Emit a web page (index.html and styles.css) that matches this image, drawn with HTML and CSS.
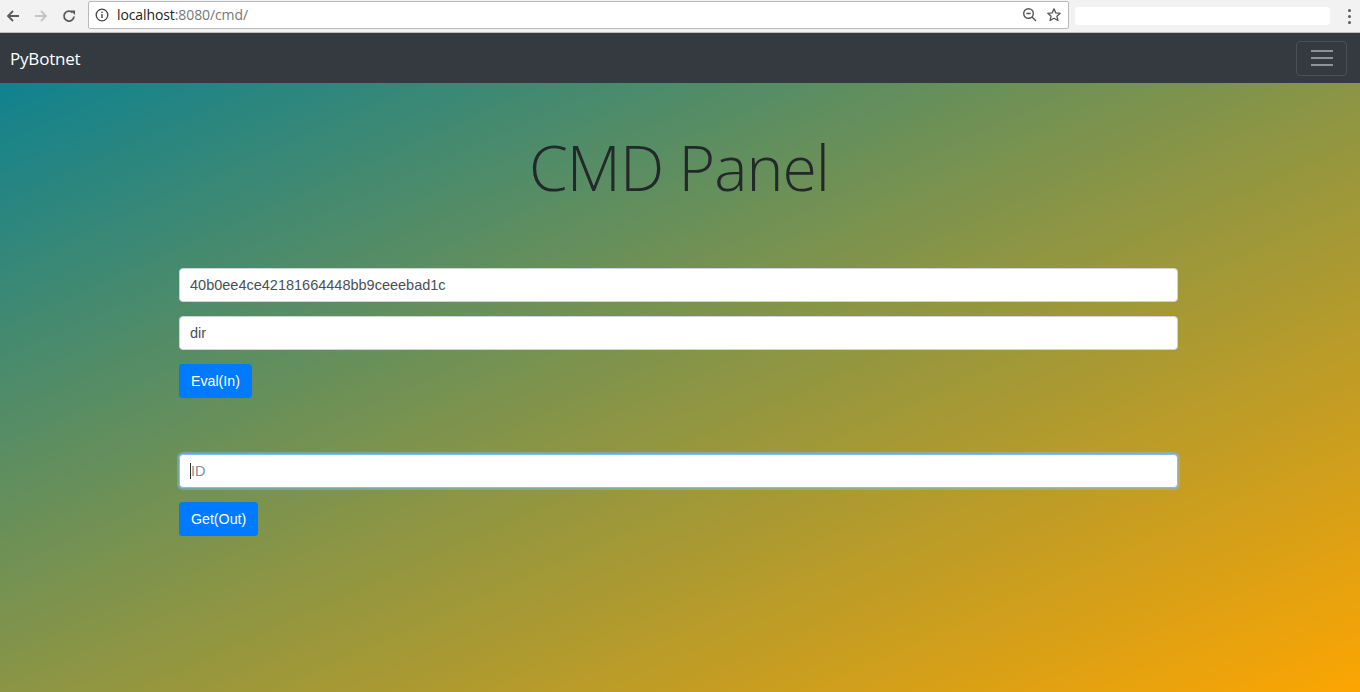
FILE: index.html
```html
<!DOCTYPE html>
<html>
<head>
<meta charset="utf-8">
<title>PyBotnet</title>
<link rel="stylesheet" href="styles.css">
</head>
<body>
<div class="chrome">
  <div class="nav-btns">
    <svg class="cicon" width="16" height="16" viewBox="0 0 16 16"><path d="M14 8H3M8 3L3 8l5 5" fill="none" stroke="#5a5a5a" stroke-width="1.8"/></svg>
    <svg class="cicon" width="16" height="16" viewBox="0 0 16 16"><path d="M2 8h11M8 3l5 5-5 5" fill="none" stroke="#c4c4c4" stroke-width="1.8"/></svg>
    <svg class="cicon" width="16" height="16" viewBox="0 0 16 16"><path d="M13 8.5A5 5 0 1 1 11.5 4.5" fill="none" stroke="#5a5a5a" stroke-width="1.8"/><path d="M9.5 2.5h4.5v4.5z" fill="#5a5a5a"/></svg>
  </div>
  <div class="omnibox">
    <svg class="info" width="14" height="14" viewBox="0 0 14 14"><circle cx="7" cy="7" r="5.8" fill="none" stroke="#444" stroke-width="1.3"/><rect x="6.3" y="6" width="1.4" height="4" fill="#444"/><rect x="6.3" y="3.6" width="1.4" height="1.4" fill="#444"/></svg>
    <span class="url"><span class="host">localhost</span><span class="path">:8080/cmd/</span></span>
    <span class="spacer"></span>
    <svg width="16" height="16" viewBox="0 0 16 16"><circle cx="6.5" cy="6.5" r="4.8" fill="none" stroke="#555" stroke-width="1.4"/><path d="M4.3 6.5h4.4M10 10l4 4" stroke="#555" stroke-width="1.4"/></svg>
    <svg width="16" height="16" viewBox="0 0 16 16"><path d="M8 1.8l1.8 4.1 4.4.4-3.3 2.9 1 4.3L8 11.2l-3.9 2.3 1-4.3-3.3-2.9 4.4-.4z" fill="none" stroke="#555" stroke-width="1.3" stroke-linejoin="round"/></svg>
  </div>
  <div class="redacted"></div>
  <div class="menu-dots"><span></span><span></span><span></span></div>
</div>
<nav class="navbar">
  <a class="brand">PyBotnet</a>
  <button class="toggler"><span></span><span></span><span></span></button>
</nav>
<main class="hero">
  <h1 class="title">CMD Panel</h1>
  <div class="panel">
    <input class="field" type="text" value="40b0ee4ce42181664448bb9ceeebad1c">
    <input class="field" type="text" value="dir">
    <button class="btn">Eval(In)</button>
    <div class="gap"></div>
    <div class="field focus"><span class="caret"></span><span class="ph">ID</span></div>
    <button class="btn">Get(Out)</button>
  </div>
</main>
</body>
</html>
```
FILE: styles.css
```css
* { box-sizing: border-box; }
html, body { margin: 0; padding: 0; height: 100%; }
body { font-family: "Liberation Sans", Arial, sans-serif; overflow: hidden; }

.chrome {
  height: 33px;
  background: #f2f2f2;
  border-bottom: 1px solid #bdbdbd;
  display: flex;
  align-items: center;
}
.nav-btns { display: flex; gap: 12px; padding-left: 5px; width: 88px; }
.cicon { display: block; }
.omnibox {
  width: 981px;
  height: 28px;
  margin-top: -3px;
  background: #fff;
  border: 1px solid #b9b9b9;
  border-radius: 2px;
  display: flex;
  align-items: center;
  gap: 8px;
  padding: 0 6px 0 6px;
}
.url { font-family: "Open Sans", "Segoe UI", sans-serif; font-size: 14px; letter-spacing: -0.1px; }
.host { color: #222; }
.path { color: #777; }
.spacer { flex: 1; }
.redacted { width: 255px; height: 18px; margin-left: 6px; background: #fff; border-radius: 3px; }
.menu-dots { margin-left: 18px; display: flex; flex-direction: column; gap: 3px; }
.menu-dots span { width: 3px; height: 3px; background: #5a5a5a; border-radius: 50%; }

.navbar {
  height: 50px;
  background: #343a40;
  display: flex;
  align-items: center;
  justify-content: space-between;
  padding: 0 13px 0 10px;
}
.brand {
  color: #fff;
  font-family: "Open Sans", "Segoe UI", sans-serif;
  font-size: 17px;
  letter-spacing: -0.2px;
}
.toggler {
  width: 51px;
  height: 35px;
  border: 1px solid #4b5056;
  border-radius: 4px;
  background: transparent;
  display: flex;
  flex-direction: column;
  align-items: center;
  justify-content: center;
  gap: 5px;
  padding: 0;
}
.toggler span { width: 22px; height: 2px; background: #8f9397; }

.hero {
  height: calc(100% - 83px);
  background: linear-gradient(to bottom right, #10828f 0%, #8a9545 50%, #fca502 100%);
  padding-top: 44px;
}
.title {
  margin: 0;
  text-align: center;
  font-family: "Open Sans", "Segoe UI", sans-serif;
  font-weight: 300;
  font-size: 62.6px;
  line-height: 80px;
  color: #23282b;
  letter-spacing: -0.95px;
  padding-right: 2px;
}
.panel {
  width: 999px;
  margin: 61px 0 0 179px;
  display: flex;
  flex-direction: column;
  align-items: flex-start;
}
.field {
  width: 100%;
  height: 34px;
  margin-bottom: 14px;
  border: 1px solid #ced4da;
  border-radius: 4px;
  background: #fff;
  padding: 0 10px;
  font-family: "Liberation Sans", Arial, sans-serif;
  font-size: 14.5px;
  color: #495057;
  outline: none;
}
.field.focus {
  display: flex;
  align-items: center;
  border-color: #80bdff;
  box-shadow: 0 0 0 2px rgba(128, 189, 255, 0.45);
}
.caret { width: 1px; height: 16px; background: #333; }
.ph { color: #868e96; }
.btn {
  height: 34px;
  padding: 0 11px;
  border: 1px solid #007bff;
  border-radius: 3px;
  background: #007bff;
  color: #fff;
  font-family: "Liberation Sans", Arial, sans-serif;
  font-size: 14.2px;
}
.gap { height: 56px; }
```
